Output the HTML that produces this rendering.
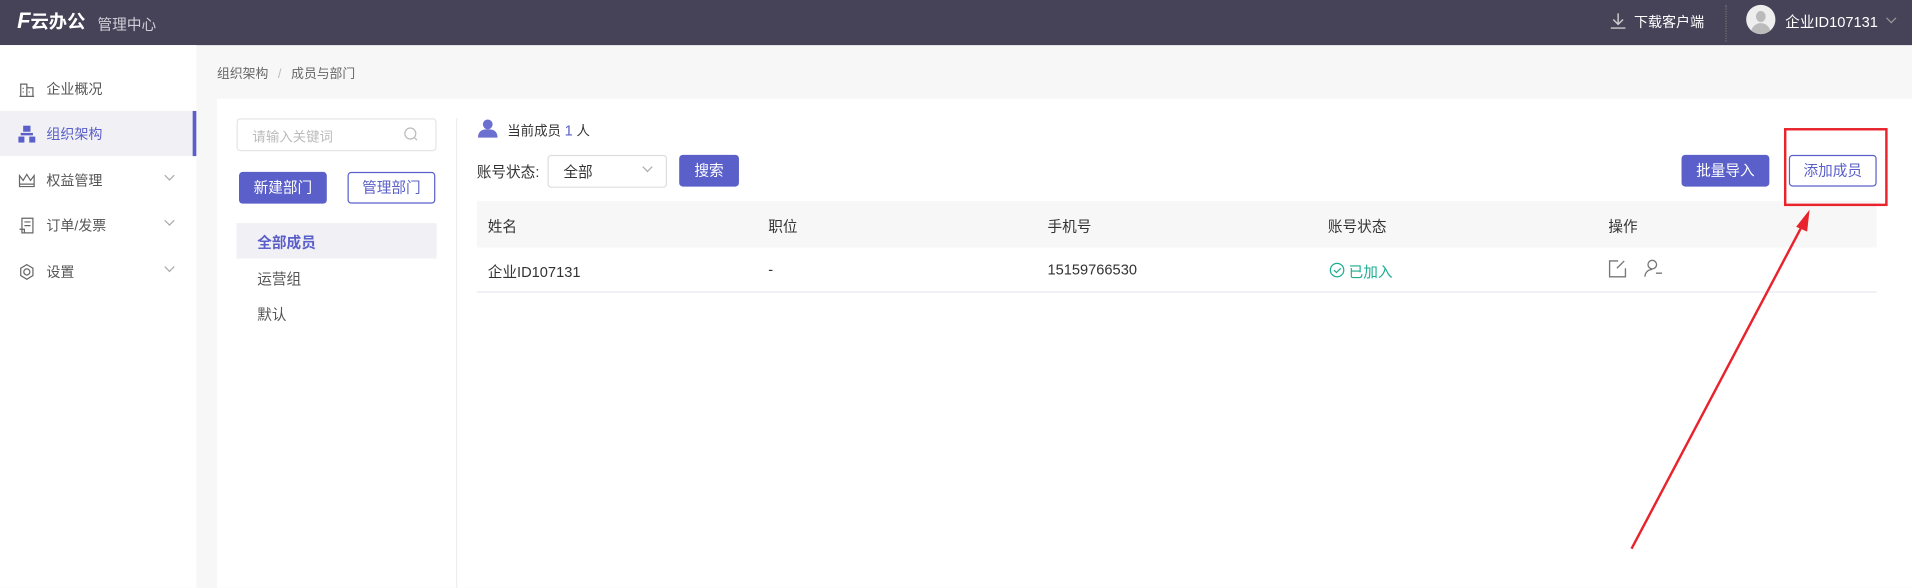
<!DOCTYPE html>
<html><head><meta charset="utf-8"><style>
*{margin:0;padding:0;box-sizing:border-box}
html,body{width:1912px;height:588px;overflow:hidden;background:#f7f7f7}
#w{position:absolute;left:0;top:0;width:1568px;height:482px;transform:scale(1.21939);transform-origin:0 0;font-family:"Liberation Sans","Noto Sans CJK SC",sans-serif;color:#333;background:#f7f7f7}
.a{position:absolute;white-space:nowrap}
.btn{position:absolute;border-radius:3px;font-size:12px;text-align:center;line-height:26px}
.f{background:#5a5fc9;color:#fff}
.o{border:1px solid #5a5fc9;color:#5a5fc9;background:#fff;line-height:24px}
.nav{position:absolute;left:0;width:161px;height:37px;font-size:11.5px;color:#555}
.nav span{position:absolute;left:38px;top:11px}
.nav svg{position:absolute;left:15px;top:12px}
.chev{position:absolute;left:136px;top:12px;width:6px;height:6px;border-right:1px solid #aaa;border-bottom:1px solid #aaa;transform:rotate(45deg)}
</style></head><body><div id="w">
<div class="a" style="left:0;top:0;width:1568px;height:37px;background:#464257"></div>
<div class="a" style="left:14px;top:7px;color:#fff;font-size:18px;font-weight:bold;font-style:italic;line-height:20px">F<span style="font-size:15px;font-style:normal">云办公</span></div>
<div class="a" style="left:80px;top:11px;color:#d0cfd8;font-size:12px">管理中心</div>
<svg class="a" style="left:1320px;top:10px" width="14" height="14" viewBox="0 0 14 14" fill="none" stroke="#ccc" stroke-width="1.2"><path d="M7 1v9M3 6l4 4 4-4M1 13h12"/></svg>
<div class="a" style="left:1340px;top:10px;color:#fff;font-size:11.5px">下载客户端</div>
<div class="a" style="left:1415px;top:4px;width:1px;height:30px;border-left:1px dotted #777"></div>
<div class="a" style="left:1432px;top:4px;width:24px;height:24px;border-radius:50%;background:#eee;overflow:hidden"><div class="a" style="left:8px;top:5px;width:8px;height:9px;border-radius:50%;background:#bbb"></div><div class="a" style="left:4px;top:15px;width:16px;height:12px;border-radius:8px 8px 0 0;background:#bbb"></div></div>
<div class="a" style="left:1464px;top:9px;color:#fff;font-size:12px">企业ID107131</div>
<div class="a" style="left:1548px;top:12px;width:6px;height:6px;border-right:1px solid #999;border-bottom:1px solid #999;transform:rotate(45deg)"></div>

<div class="a" style="left:0;top:37px;width:161px;height:445px;background:#fff"></div>
<div class="nav" style="top:54px"><svg width="14" height="14" fill="none" stroke="#666"><path d="M1 13h12M2 13V3h5v10M7 6h5v7M4 6v1M4 9v1M9 9v1"/></svg><span>企业概况</span></div>
<div class="nav" style="top:91px;background:#f0f0f5;border-right:3px solid #5a5fc9;color:#5a5fc9"><svg width="14" height="14" fill="#5a5fc9"><rect x="4" y="0" width="6" height="5"/><rect x="0" y="9" width="5" height="5"/><rect x="9" y="9" width="5" height="5"/><rect x="2" y="6" width="10" height="2"/></svg><span>组织架构</span></div>
<div class="nav" style="top:129px"><svg width="14" height="14" fill="none" stroke="#666"><path d="M1 3l3 4 3-5 3 5 3-4v9H1zM1 10h12"/></svg><span>权益管理</span><i class="chev"></i></div>
<div class="nav" style="top:166px"><svg width="14" height="14" fill="none" stroke="#666"><path d="M3 1h9v12H3zM5 4h5M5 7h5M1 10h4v3"/></svg><span>订单/发票</span><i class="chev"></i></div>
<div class="nav" style="top:204px"><svg width="14" height="14" fill="none" stroke="#666"><circle cx="7" cy="7" r="2.5"/><path d="M7 1l5 3v6l-5 3-5-3V4z"/></svg><span>设置</span><i class="chev"></i></div>

<div class="a" style="left:178px;top:53px;font-size:10.5px;color:#666">组织架构 <span style="color:#bbb;margin:0 5px">/</span> 成员与部门</div>
<div class="a" style="left:178px;top:81px;width:1390px;height:401px;background:#fff"></div>
<div class="a" style="left:194px;top:97px;width:164px;height:27px;border:1px solid #e5e5e5;border-radius:3px"></div>
<div class="a" style="left:207px;top:104px;font-size:11px;color:#bbb">请输入关键词</div>
<svg class="a" style="left:331px;top:104px" width="12" height="12" fill="none" stroke="#bbb"><circle cx="5.5" cy="5.5" r="4.5"/><path d="M9 9l2 2"/></svg>
<div class="btn f" style="left:196px;top:141px;width:72px;height:26px">新建部门</div>
<div class="btn o" style="left:285px;top:141px;width:72px;height:26px">管理部门</div>
<div class="a" style="left:194px;top:183px;width:164px;height:29px;background:#f0f0f5"></div>
<div class="a" style="left:211px;top:190px;font-size:12px;color:#5a5fc9;font-weight:bold">全部成员</div>
<div class="a" style="left:211px;top:220px;font-size:12px;color:#555">运营组</div>
<div class="a" style="left:211px;top:249px;font-size:12px;color:#555">默认</div>
<div class="a" style="left:374px;top:97px;width:1px;height:385px;background:#eee"></div>

<svg class="a" style="left:391px;top:97px" width="18" height="16" fill="#6b6fcf"><circle cx="9" cy="5" r="4"/><path d="M1 16c0-6 4-7 8-7s8 1 8 7z"/></svg>
<div class="a" style="left:416px;top:99px;font-size:11px">当前成员 <span style="color:#5a5fc9;font-size:12px">1</span> 人</div>
<div class="a" style="left:391px;top:132px;font-size:12px">账号状态:</div>
<div class="a" style="left:449px;top:127px;width:98px;height:27px;border:1px solid #ddd;border-radius:3px"></div>
<div class="a" style="left:462px;top:132px;font-size:12px">全部</div>
<div class="a" style="left:528px;top:134px;width:6px;height:6px;border-right:1px solid #aaa;border-bottom:1px solid #aaa;transform:rotate(45deg)"></div>
<div class="btn f" style="left:557px;top:127px;width:49px;height:26px">搜索</div>
<div class="btn f" style="left:1379px;top:127px;width:72px;height:26px">批量导入</div>
<div class="btn o" style="left:1467px;top:127px;width:72px;height:26px">添加成员</div>

<div class="a" style="left:391px;top:165px;width:1148px;height:38px;background:#f7f7f7"></div>
<div class="a" style="left:391px;top:239px;width:1148px;height:1px;background:#e8e8f0"></div>
<div class="a" style="left:400px;top:177px;font-size:12px">姓名</div>
<div class="a" style="left:630px;top:177px;font-size:12px">职位</div>
<div class="a" style="left:859px;top:177px;font-size:12px">手机号</div>
<div class="a" style="left:1089px;top:177px;font-size:12px">账号状态</div>
<div class="a" style="left:1319px;top:177px;font-size:12px">操作</div>
<div class="a" style="left:400px;top:214px;font-size:12px">企业ID107131</div>
<div class="a" style="left:630px;top:214px;font-size:12px">-</div>
<div class="a" style="left:859px;top:214px;font-size:12px">15159766530</div>
<svg class="a" style="left:1090px;top:215px" width="13" height="13" fill="none" stroke="#1aad8f"><circle cx="6.5" cy="6.5" r="5.5"/><path d="M4 6.5l2 2 3.5-3.5"/></svg>
<div class="a" style="left:1106px;top:214px;font-size:12px;color:#1aad8f">已加入</div>
<svg class="a" style="left:1319px;top:213px" width="15" height="15" fill="none" stroke="#777" stroke-width="1.1"><path d="M8 1H1v13h13V7M13 1l-6 6"/></svg>
<svg class="a" style="left:1348px;top:212px" width="16" height="16" fill="none" stroke="#777" stroke-width="1.1"><circle cx="7" cy="5" r="3.5"/><path d="M1 15c0-4 3-6 6-6M10 12h5"/></svg>

<div class="a" style="left:1463px;top:105px;width:85px;height:64px;border:2px solid #e8232b"></div>
<svg class="a" style="left:0;top:0" width="1568" height="482"><line x1="1338" y1="450" x2="1478" y2="185" stroke="#e8232b" stroke-width="2"/><path d="M1484 172l-11 14 9 4z" fill="#e8232b"/></svg>
</div></body></html>
